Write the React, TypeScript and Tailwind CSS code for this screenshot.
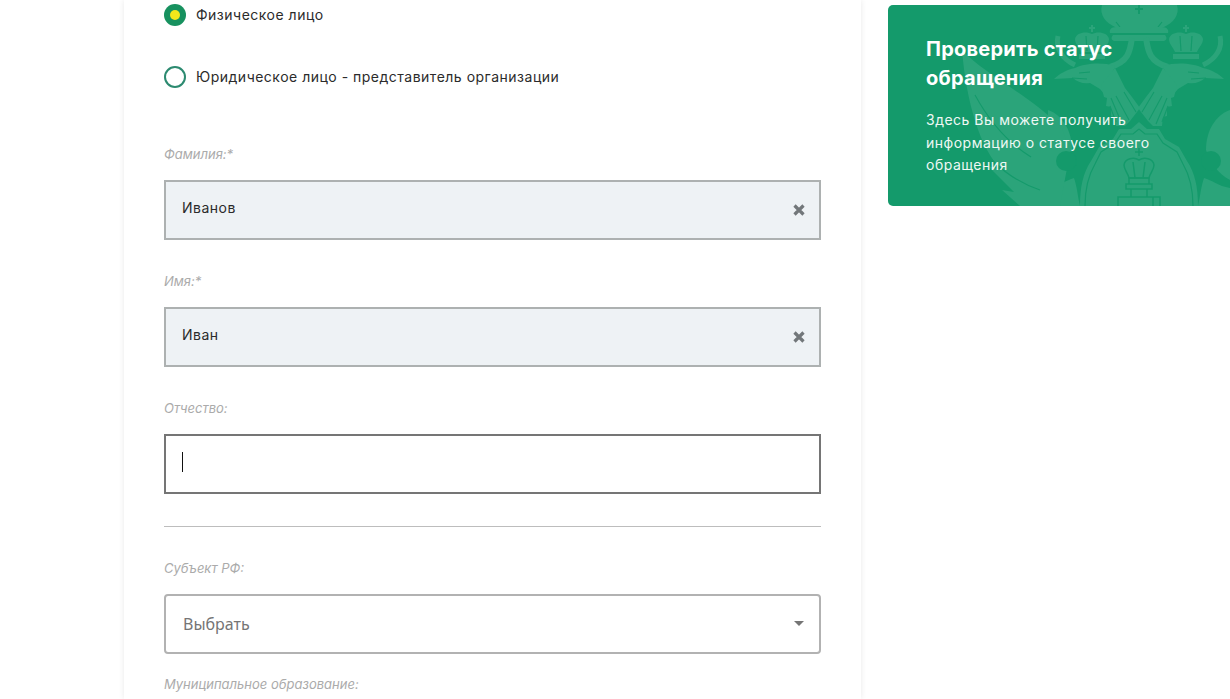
import React from "react";

const font = { fontFamily: '"Inter", "Liberation Sans", sans-serif' };

function Label({ children, className = "" }: { children: React.ReactNode; className?: string }) {
  return <div className={`h-5 text-[13px] leading-5 italic text-[#ababab] ${className}`}>{children}</div>;
}

function Clear() {
  return (
    <svg width="12" height="12" viewBox="0 0 12 12" className="absolute right-[14px] top-[22px]">
      <path d="M1.5 1.5L10.5 10.5M10.5 1.5L1.5 10.5" stroke="#72777a" strokeWidth="3.2" />
    </svg>
  );
}

function FilledInput({ value }: { value: string }) {
  return (
    <div className="relative h-[60px] border-2 border-[#adb1b1] bg-[#eef2f5] pl-4 pt-px text-sm leading-[50px] tracking-[0.5px] text-[#2b2b2b]">
      {value}
      <Clear />
    </div>
  );
}

function Eagle() {
  const c = "#2ba47a";
  const b = "#149a6b";
  const half = (
    <g>
      {/* small crown */}
      <path d="M1186 25v7M1183 28h6" stroke={c} strokeWidth="2" />
      <path d="M1186 34c5-3 16-2 17 5 0 5-4 8-6 13h-22c-2-5-6-8-6-13 1-7 12-8 17-5z" fill={c} />
      <path d="M1180 36l1 15M1192 36l-1 15" stroke={b} strokeWidth="1.2" />
      <rect x="1173" y="54" width="26" height="5" fill={c} />
      {/* arcs from the big crown and from the wing */}
      <path d="M1146 38c2 14 4 24 22 29" stroke={c} strokeWidth="6" fill="none" />
      <path d="M1220 36c3 12-4 23-17 29" stroke={c} strokeWidth="5" fill="none" />
      {/* head */}
      <path d="M1163 66c12-4 30-3 40 2 9 2 16 6 21 11l-19-1c-4 4-10 6-17 5l-10 6-5 6z" fill={c} />
      <path d="M1188 72l11 1M1206 78l-15 1" stroke={b} strokeWidth="1.2" fill="none" />
      {/* neck feathers */}
      <path d="M1163 68l14 17-3 12-3 1 1 8-5 1 0 9-4 1-1 9-9 0-5-5-7-9-3-4 8-11 7-9z" fill={c} />
      <path d="M1142 112l12-20M1149 120l13-24M1156 124l11-26M1162 122l6-16" stroke={b} strokeWidth="1.1" fill="none" />
      {/* side wing */}
      <path d="M1230 110c-14 5-24 20-24 40 4 12 12 24 24 30z" fill={c} />
      <circle cx="1211" cy="161" r="10" fill={b} />
      <path d="M1204 178c8 2 14 8 26 10v18h-32c2-8 3-20 6-28z" fill={c} />
    </g>
  );
  return (
    <svg viewBox="888 5 342 201" className="absolute inset-0 h-[201px] w-[342px]" aria-hidden="true">
      {/* big crown */}
      <path d="M1102 5h75c3 10-4 18-13 22h-49c-9-4-16-12-13-22z" fill={c} />
      <path d="M1139 5v9M1135 9h8" stroke={b} strokeWidth="2" />
      <path d="M1116 22l4 5M1162 22l-4 5" stroke={b} strokeWidth="1.2" />
      <path d="M1116 27h46c5 0 7 3 6 6h-58c-1-3 1-6 6-6z" fill={c} />
      <path d="M1113 35h52c2 2 2 5-1 6h-50c-3-1-3-4-1-6z" fill={c} />
      {half}
      <g transform="translate(2278 0) scale(-1 1)">{half}</g>
      {/* long left wing */}
      <path d="M962 50c22 24 66 44 100 78l8 24-10 54h-40l-18-16 12 2-26-26 14 4c-22-20-36-70-40-120z" fill={c} />
      <path d="M975 95c12 22 30 46 56 62M992 160c14 14 30 24 48 30" stroke={b} strokeWidth="1.1" fill="none" />
      <circle cx="1066" cy="161" r="10" fill={b} />
      {/* shield */}
      <path d="M1139 122l8 7h12l6 10 14 8 8 14c8 12 11 26 11 45h-118c0-19 3-33 11-45l8-14 14-8 6-10h12z" fill={c} />
      <path d="M1139 129l6 5h12l6 9 14 9 6 12c7 12 10 26 10 42M1139 129l-6 5h-12l-6 9-14 9-6 12c-7 12-10 26-10 42" stroke={b} strokeWidth="1.2" fill="none" />
      {/* chess king */}
      <g fill="none" stroke={b} strokeWidth="1.5">
        <path d="M1139 148v8M1135 152h8" />
        <path d="M1139 160c5-3 14-2 15 5 0 5-4 8-5 13h-20c-1-5-5-8-5-13 1-7 10-8 15-5zM1133 162l2 16M1145 162l-2 16" />
        <path d="M1129 178h20v6h-20zM1126 184h26v5h-26zM1131 189v8M1147 189v8M1125 197h28v9M1118 206v-9h7M1160 206v-9h-7" />
      </g>
    </svg>
  );
}

export default function App() {
  return (
    <div className="flex h-[699px] overflow-hidden bg-white pl-[124px]" style={font}>
      <main className="h-[699px] w-[737px] shrink-0 bg-white px-10 pt-1 shadow-[0_0_6px_rgba(0,0,0,0.09)]">
        <div className="flex h-[22px] items-center gap-[10px] text-sm leading-[22px] tracking-[0.5px] text-[#2b2b2b]">
          <span className="flex size-[22px] items-center justify-center rounded-full bg-[#17915f]">
            <span className="size-[10px] rounded-full bg-[#f3e71b]" />
          </span>
          <span className="-mt-[1px]">Физическое лицо</span>
        </div>
        <div className="mt-10 flex h-[22px] items-center gap-[10px] text-sm leading-[22px] tracking-[0.5px] text-[#2b2b2b]">
          <span className="size-[22px] rounded-full border-2 border-[#2c8a70] bg-white" />
          <span className="-mt-[1px]">Юридическое лицо - представитель организации</span>
        </div>

        <Label className="mt-14">Фамилия:*</Label>
        <div className="mt-4"><FilledInput value="Иванов" /></div>

        <Label className="mt-[31px]">Имя:*</Label>
        <div className="mt-4"><FilledInput value="Иван" /></div>

        <Label className="mt-[31px]">Отчество:</Label>
        <div className="mt-4 flex h-[60px] items-center border-2 border-[#757575] bg-white pb-1 pl-4">
          <span className="h-5 w-px bg-[#111]" />
        </div>

        <hr className="mt-8 border-0 border-t border-[#bdbdbd]" />

        <Label className="mt-[31px]">Субъект РФ:</Label>
        <div className="relative mt-4 flex h-[60px] items-center rounded-[4px] border-2 border-[#b2b2b2] bg-white pb-px pl-[17px] text-base text-[#757575]" style={{ fontFamily: '"Noto Sans", sans-serif' }}>
          Выбрать
          <span className="absolute right-[15px] top-[25px] h-0 w-0 border-x-[5px] border-t-[5px] border-x-transparent border-t-[#757575]" />
        </div>

        <Label className="mt-5">Муниципальное образование:</Label>
      </main>
      <aside className="ml-[27px] mt-[5px] h-[201px] w-[342px] shrink-0">
        <div className="relative h-full overflow-hidden rounded-l-[5px] bg-[#149a6b] pl-[38px] pt-[30px]">
          <Eagle />
          <div className="relative text-white">
            <h2 className="w-[230px] text-xl font-bold leading-[29px] tracking-[0.25px]">Проверить статус обращения</h2>
            <p className="mt-4 w-[250px] text-sm leading-[22.5px] tracking-[0.5px] text-[#eef8f4]">
              Здесь Вы можете получить информацию о статусе своего обращения
            </p>
          </div>
        </div>
      </aside>
    </div>
  );
}
